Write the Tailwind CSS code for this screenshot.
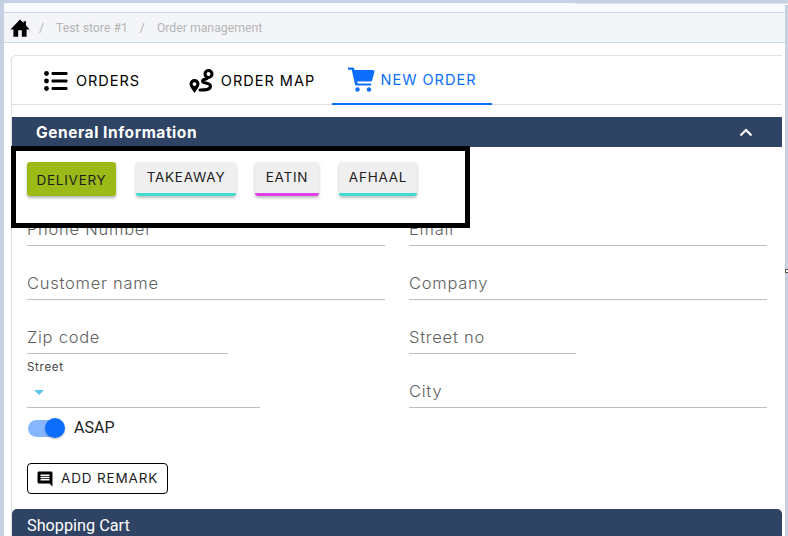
<!DOCTYPE html>
<html><head><meta charset="utf-8">
<script src="https://cdn.jsdelivr.net/npm/@tailwindcss/browser@4"></script>
</head>
<body class="m-0 bg-white overflow-hidden">
<div class="relative w-[788px] h-[536px] overflow-hidden flex flex-col bg-[#c5d0e2] pt-[3px] pl-[4px] pr-[3px] font-['Inter','Liberation_Sans',sans-serif]">
  <div class="absolute right-0 top-[3px] w-[213px] h-[2px] bg-white border-t border-[#dfe4ec]"></div>
  <div class="absolute right-0 top-[269px] w-[3px] h-[4px] bg-white border border-[#555] border-r-0"></div>
  <div class="h-[9px] shrink-0 bg-[#fafbff]"></div>
  <nav class="h-[31px] shrink-0 flex items-center bg-[#f4f5f9] border-y border-[#cbd8ea] pl-[5px] text-[12.250px] text-[#b5b5b5] font-['Roboto',sans-serif]">
    <svg width="22" height="22" viewBox="0 0 24 24" class="block"><path fill="#000" d="M10 21.500v-7h4v7h5.200v-8h3.300L18.500 9V4.500h-2.700v2L12 2.800 1.500 13.500h3.300v8z"/></svg>
    <span class="flex mt-[2px]"><span class="ml-[8px]">/</span><span class="ml-[12px]">Test store #1</span><span class="ml-[12px]">/</span><span class="ml-[12px]">Order management</span></span>
  </nav>
  <main class="flex-1 bg-white pl-[7px] pt-[12px] min-h-0">
    <div class="w-[771px] border-l border-t border-[#dfdfdf] rounded-tl-[5px] h-full">
      <div class="h-[49px] flex border-b border-[#dedede] relative text-[14.500px] tracking-[1px] font-normal">
        <a class="w-[160px] h-[49px] flex items-center justify-center gap-[8px] text-black">
          <svg width="24" height="20" viewBox="0 0 24 20" class="block"><g fill="#000"><circle cx="2.500" cy="2.500" r="2.400"/><circle cx="2.500" cy="10" r="2.400"/><circle cx="2.500" cy="17.500" r="2.400"/><rect x="7.500" y="1" width="16" height="3" rx="1"/><rect x="7.500" y="8.500" width="16" height="3" rx="1"/><rect x="7.500" y="16" width="16" height="3" rx="1"/></g></svg>
          <span>ORDERS</span>
        </a>
        <a class="w-[160px] h-[49px] flex items-center justify-center gap-[6px] text-black">
          <svg width="26" height="24" viewBox="0 0 26 24" class="block"><path fill="#000" fill-rule="evenodd" d="M5.500 10a5 5 0 0 1 5 5c0 3-3.300 6-5 9-1.700-3-5-6-5-9a5 5 0 0 1 5-5zm0 3.200a1.900 1.900 0 1 0 0 3.800 1.900 1.900 0 0 0 0-3.800zM19.500 0a5 5 0 0 1 0 10 5 5 0 0 1 0-10zm0 3.100a1.900 1.900 0 1 0 0 3.800 1.900 1.900 0 0 0 0-3.800z"/><path fill="none" stroke="#000" stroke-width="3" stroke-linecap="round" d="M18 9.500c-1.500 1-4.500.8-4.500 2.700 0 2.300 8 1.300 8 4.800 0 4-5 4-10.500 4"/></svg>
          <span>ORDER MAP</span>
        </a>
        <a class="w-[160px] h-[49px] flex items-center justify-center gap-[6px] text-[#0d6efd] border-b-2 border-[#0d6efd]">
          <svg width="27" height="25" viewBox="0 0 27 25" class="block"><path fill="#0d6efd" d="M0 .500h4.800c.8 0 1.300.4 1.500 1.200l.3 1.300H25c1 0 1.700.9 1.400 1.900l-2.200 8.300c-.2.800-.9 1.300-1.700 1.300H9.300l.4 2h13.500v2H8.200c-.6 0-1-.4-1.200-1L3.700 2.700H0z"/><circle cx="9.500" cy="22.500" r="2.200" fill="#0d6efd"/><circle cx="21" cy="22.500" r="2.200" fill="#0d6efd"/></svg>
          <span>NEW ORDER</span>
        </a>
      </div>
      <section class="mt-[12px] relative">
        <header class="w-[770px] h-[30px] bg-[#2f4365] flex items-center justify-between pl-[24px] pr-[29px] text-white text-[15.500px] tracking-[0.55px] font-bold">
          <span class="mt-[2px]">General Information</span>
          <svg width="14" height="9" viewBox="0 0 14 9" class="block"><path fill="none" stroke="#fff" stroke-width="2.200" d="M1.500 7.500 7 2l5.500 5.500"/></svg>
        </header>
        <div class="absolute left-[-1px] top-[29px] w-[459px] h-[82px] bg-white border-[5px] border-black z-10 flex items-start pl-[11px] pt-[11px] text-[13.500px] tracking-[0.75px] font-normal text-[#1d1d1d]">
          <button class="w-[89px] h-[34px] rounded-[3px] bg-[#9cba17] shadow-[0_2px_3px_rgba(0,0,0,0.3)] pt-[2px]">DELIVERY</button>
          <button class="ml-[20px] w-[100px] h-[34px] rounded-[3px] bg-[#efefef] border-b-[3px] border-[#3fdcd0] shadow-[0_2px_3px_rgba(0,0,0,0.25)]">TAKEAWAY</button>
          <button class="ml-[19px] w-[64px] h-[34px] rounded-[3px] bg-[#efefef] border-b-[3px] border-[#e040e8] shadow-[0_2px_3px_rgba(0,0,0,0.25)]">EATIN</button>
          <button class="ml-[20px] w-[78px] h-[34px] rounded-[3px] bg-[#efefef] border-b-[3px] border-[#3fdcd0] shadow-[0_2px_3px_rgba(0,0,0,0.25)]">AFHAAL</button>
        </div>
        <form class="pl-[15px] pt-[45px] w-[755px] text-[16.500px] font-light text-[#5f5f5f] tracking-[0.75px]">
          <div class="grid grid-cols-2 gap-x-[24px] w-[740px]">
            <div class="h-[54px] border-b border-[#bdbdbd] flex items-end pb-[3px]">Phone Number</div>
            <div class="h-[54px] border-b border-[#bdbdbd] flex items-end pb-[3px]">Email</div>
            <div class="h-[54px] border-b border-[#bdbdbd] flex items-end pb-[3px]">Customer name</div>
            <div class="h-[54px] border-b border-[#bdbdbd] flex items-end pb-[3px]">Company</div>
            <div class="h-[54px] w-[201px] border-b border-[#bdbdbd] flex items-end pb-[3px]">Zip code</div>
            <div class="h-[54px] w-[167px] border-b border-[#bdbdbd] flex items-end pb-[3px]">Street no</div>
            <div class="h-[54px] w-[233px] border-b border-[#bdbdbd] flex flex-col">
              <span class="text-[11.500px] font-normal text-[#444] mt-[5px] leading-[16px] tracking-[0.7px]">Street</span>
              <svg width="10" height="5" viewBox="0 0 10 5" class="block ml-[7px] mt-[15px]"><path fill="#5cc4e4" d="M0 0h10L5 5z"/></svg>
            </div>
            <div class="h-[54px] border-b border-[#bdbdbd] flex items-end pb-[3px]">City</div>
          </div>
          <div class="flex items-center h-[20px] mt-[10px] text-[#212121] font-normal font-['Roboto',sans-serif] text-[16px] tracking-normal">
            <span class="relative w-[36px] h-[17px] rounded-full bg-[#86b6fe] ml-[1px]"><span class="absolute right-[-1px] top-[-2px] w-[20px] h-[20px] rounded-full bg-[#0d6efd] shadow-[0_1px_2px_rgba(0,0,0,0.3)]"></span></span>
            <span class="ml-[10px]">ASAP</span>
          </div>
          <button type="button" class="mt-[25px] flex items-center w-[141px] h-[31px] border border-black rounded-[4px] pl-[8px] gap-[7px] text-[13.500px] tracking-[0.85px] font-normal text-[#1d1d1d]">
            <svg width="18" height="18" viewBox="0 0 24 24" class="block shrink-0"><path fill="#000" d="M21.990 4c0-1.100-.89-2-1.990-2H4c-1.100 0-2 .9-2 2v12c0 1.100.9 2 2 2h14l4 4-.01-18zM18 14H6v-2h12v2zm0-3H6V9h12v2zm0-3H6V6h12v2z"/></svg>
            <span>ADD REMARK</span>
          </button>
        </form>
        <div class="mt-[15px] w-[770px] h-[40px] rounded-t-[5px] bg-[#2f4365] text-white pl-[15px] pt-[5px] text-[16.250px] font-['Roboto',sans-serif]">Shopping Cart</div>
      </section>
    </div>
  </main>
</div>
</body></html>
